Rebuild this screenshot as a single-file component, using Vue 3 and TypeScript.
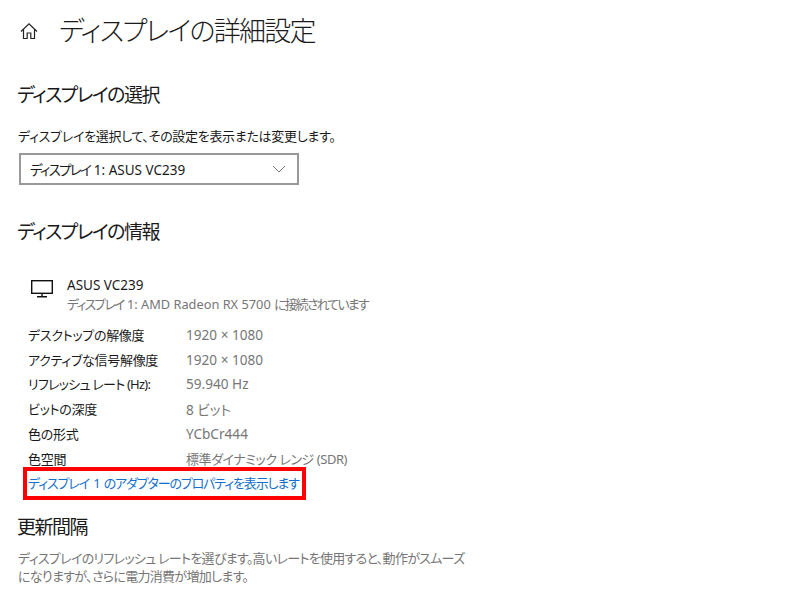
<script setup lang="ts">
interface Row { label: string; value: string; tight?: boolean; cjk?: boolean }
const rows: Row[] = [
  { label: 'デスクトップの解像度', value: '1920 × 1080' },
  { label: 'アクティブな信号解像度', value: '1920 × 1080' },
  { label: 'リフレッシュ レート (Hz):', value: '59.940 Hz', tight: true },
  { label: 'ビットの深度', value: '8 ビット' },
  { label: '色の形式', value: 'YCbCr444' },
  { label: '色空間', value: '標準ダイナミック レンジ (SDR)', cjk: true },
]
</script>

<template>
  <div class="page">
    <header class="top">
      <svg class="home" width="18" height="18" viewBox="0 0 18 18" fill="none" stroke="#222" stroke-width="1.2">
        <path d="M1 9.5 9 1.8l8 7.7" />
        <path d="M3.5 7.5v9h3.7v-5.5h3.6v5.5h3.7v-9" />
      </svg>
      <h1>ディスプレイの詳細設定</h1>
    </header>

    <h2 class="sec-select">ディスプレイの選択</h2>
    <p class="desc">ディスプレイを選択して、その設定を表示または変更します。</p>
    <div class="select">
      <span><span class="k">ディスプレイ</span> 1: ASUS VC239</span>
      <svg width="14" height="8" viewBox="0 0 14 8" fill="none" stroke="#777" stroke-width="1">
        <path d="M1 1l6 6 6-6" />
      </svg>
    </div>

    <h2 class="sec-info">ディスプレイの情報</h2>
    <div class="monitor">
      <svg class="mon-icon" width="24" height="20" viewBox="0 0 24 20" fill="none" stroke="#111" stroke-width="1.4">
        <rect x="1.7" y="1.7" width="20.6" height="12.6" />
        <path d="M12 14.5v3M7 17.8h10" />
      </svg>
      <div>
        <div class="mon-name">ASUS VC239</div>
        <div class="mon-sub"><span class="k2">ディスプレイ</span> 1: AMD Radeon RX 5700 <span class="k2">に接続されています</span></div>
      </div>
    </div>

    <dl class="rows">
      <div v-for="r in rows" :key="r.label" class="row">
        <dt :class="{ tight: r.tight }">{{ r.label }}</dt>
        <dd :class="{ cjk: r.cjk }">{{ r.value }}</dd>
      </div>
    </dl>

    <a class="link">ディスプレイ 1 のアダプターのプロパティを表示します</a>

    <h2 class="sec-rate">更新間隔</h2>
    <p class="note">ディスプレイのリフレッシュ レートを選びます。高いレートを使用すると、動作がスムーズ<br />になりますが、さらに電力消費が増加します。</p>
  </div>
</template>

<style>
html, body { margin: 0; background: #fff; }
</style>

<style scoped>
.page {
  width: 800px;
  height: 600px;
  overflow: hidden;
  box-sizing: border-box;
  padding: 0 0 0 18px;
  font-family: "Noto Sans", "Noto Sans CJK JP", sans-serif;
  font-feature-settings: "palt";
  font-size: 13px;
  color: #1a1a1a;
}
h1, h2, p, dl, dd { margin: 0; font-weight: 400; }
.top {
  display: flex;
  align-items: center;
  gap: 21px;
  height: 62px;
  padding-left: 2px;
}
h1 { font-size: 27px; font-weight: 300; line-height: 62px; letter-spacing: -1.75px; }
h2 { font-size: 19px; line-height: 28px; letter-spacing: -1.5px; }
.k { letter-spacing: -1.7px; }
.k2 { letter-spacing: -1.7px; }
.sec-select { margin-top: 19px; margin-left: -1px; }
.desc { margin-top: 17px; line-height: 20px; letter-spacing: -0.3px; }
.select {
  margin-top: 7px;
  margin-left: 1px;
  width: 280px;
  height: 32px;
  box-sizing: border-box;
  border: 2px solid #999;
  padding: 0 9px;
  display: flex;
  align-items: center;
  justify-content: space-between;
  font-size: 13.5px;
}
.select svg { margin-right: 2px; }
.sec-info { margin-top: 33px; margin-left: -1px; }
.monitor { display: flex; margin-top: 29px; padding-left: 12px; }
.mon-icon { margin-top: 4px; margin-right: 13px; }
.mon-name { line-height: 20px; font-size: 13.5px; }
.mon-sub { line-height: 19px; font-size: 12.8px; color: #767676; white-space: nowrap; }
.rows { margin-top: 8px; padding-left: 10px; }
.row { display: flex; height: 24.8px; align-items: center; }
dt { width: 158px; letter-spacing: -0.3px; }
dt.tight { letter-spacing: -0.75px; }
dd { color: #767676; font-size: 13.6px; }
dd.cjk { font-size: 13px; letter-spacing: -0.45px; }
.link {
  display: block;
  width: 283px;
  height: 33px;
  margin-top: -3.8px;
  margin-left: 5px;
  box-sizing: border-box;
  border: 4px solid #f00;
  padding-left: 1px;
  line-height: 25px;
  color: #1470cc;
  white-space: nowrap;
  letter-spacing: -1.15px;
  word-spacing: 2px;
}
.sec-rate { margin-top: 13px; margin-left: -1px; }
.note { margin-top: 8px; line-height: 18px; font-size: 13px; letter-spacing: -0.7px; color: #767676; white-space: nowrap; }
</style>
